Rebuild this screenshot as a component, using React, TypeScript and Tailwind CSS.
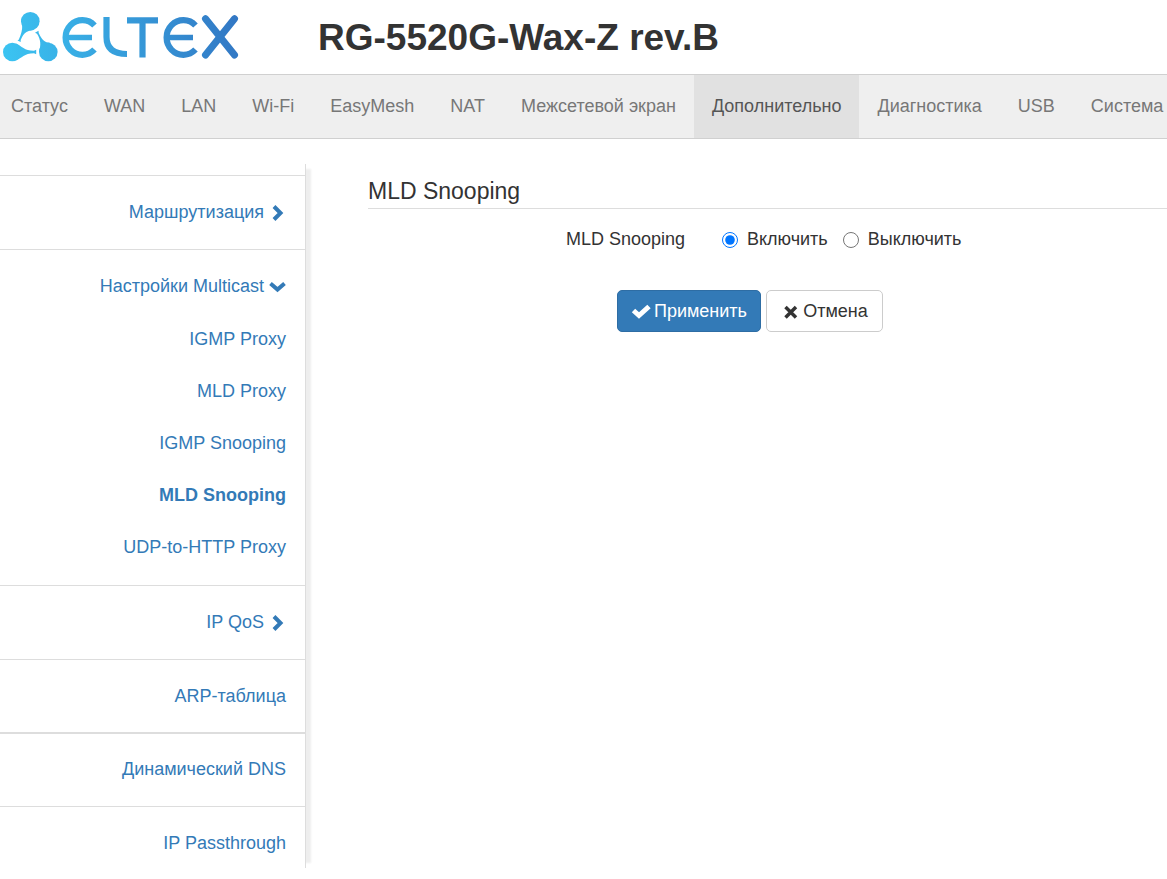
import { useState } from "react";

interface SubItem {
    label: string;
    active?: boolean;
}

interface MenuItem {
    label: string;
    arrow?: "right" | "down";
    children?: SubItem[];
}

const tabs = ["Статус", "WAN", "LAN", "Wi-Fi", "EasyMesh", "NAT", "Межсетевой экран", "Дополнительно", "Диагностика", "USB", "Система"];

const menu: MenuItem[] = [
    { label: "Маршрутизация", arrow: "right" },
    {
        label: "Настройки Multicast",
        arrow: "down",
        children: [
            { label: "IGMP Proxy" },
            { label: "MLD Proxy" },
            { label: "IGMP Snooping" },
            { label: "MLD Snooping", active: true },
            { label: "UDP-to-HTTP Proxy" },
        ],
    },
    { label: "IP QoS", arrow: "right" },
    { label: "ARP-таблица" },
    { label: "Динамический DNS" },
    { label: "IP Passthrough" },
];

const Logo = () => (
    <svg viewBox="0 0 240 64" className="h-16 w-60" role="img" aria-label="Eltex">
        <defs>
            <linearGradient id="eltex" gradientUnits="userSpaceOnUse" x1="3" y1="50" x2="238" y2="20">
                <stop offset="0" stopColor="#3bc4f2" />
                <stop offset="1" stopColor="#3277c4" />
            </linearGradient>
        </defs>
        <g fill="url(#eltex)">
            <circle cx="30.300" cy="21.200" r="9.300" />
            <path d="M21.200 19 Q23 27 21.500 32 Q20.500 36 18.700 39.700 L17.500 40.400 L20.700 42 L20.700 40 Q23 34 26.500 32 Q29 30.500 33 30 L30 21 Z" />
            <circle cx="12.300" cy="52" r="9.300" />
            <path d="M16 43.500 C22 46 24 50.800 34 50.800 L36.200 49.800 V54.200 L34 53.200 C24 53.200 22 58 16 60.500 L12 52 Z" />
            <circle cx="48.300" cy="52" r="9.300" />
            <path d="M39 52 C41 45 41 40 37 33.800 L35 32.800 L38.500 30.700 L38.700 33 C42 40 45 42.700 50 42.700 L48 52 Z" />
        </g>
        <g fill="none" stroke="url(#eltex)" strokeWidth="6.200">
            <path d="M94.500 25.500 A16.800 17.300 0 1 0 94.500 49.500" />
            <path d="M64 37.500 L92 37.499" strokeWidth="5.600" />
            <path d="M106.500 17 V37 Q106.500 54 127 54" />
            <path d="M127 20.300 L158 20.299 M142.500 20 L142.501 57.500" />
            <path d="M195.500 25.500 A16.800 17.300 0 1 0 195.500 49.500" />
            <path d="M165 37.500 L193 37.499" strokeWidth="5.600" />
            <path d="M205.500 18.700 L234.500 55 M234.500 18.700 L205.500 55" strokeWidth="7" strokeLinecap="round" />
        </g>
    </svg>
);

const Arrow = ({ direction }: { direction: "right" | "down" }) => (
    <svg viewBox="0 0 18 18" className="size-[18px] fill-none stroke-current stroke-[4]" aria-hidden="true">
        {direction === "right" ? <path d="M6 2.500 L12.500 9 L6 15.500" /> : <path d="M2.500 5.500 L9.500 11.500 L16.500 5.500" />}
    </svg>
);

const App = () => {
    const [enabled, setEnabled] = useState(true);

    return (
        <div className="min-h-screen overflow-hidden bg-white font-['Liberation_Sans',Arial,sans-serif] text-lg leading-[25px] text-[#333]">
            <header className="flex h-[74px] items-start">
                <Logo />
                <h1 className="ml-[78px] mt-4 whitespace-nowrap text-[37px] leading-[44px] font-bold">RG-5520G-Wax-Z rev.B</h1>
            </header>

            <nav className="flex border-y border-[#d0d0d0] bg-[#efefef]">
                {tabs.map((tab) => (
                    <a
                        key={tab}
                        href="#"
                        className={
                            tab === "Дополнительно"
                                ? "whitespace-nowrap bg-[#e1e1e1] px-[18px] py-[19px] text-[#555]"
                                : "whitespace-nowrap px-[18px] py-[19px] text-[#777] first:pl-[11px]"
                        }
                    >
                        {tab}
                    </a>
                ))}
            </nav>

            <div className="flex items-start pt-[25px]">
                <aside className="w-[306px] shrink-0 border-r border-[#ddd] pt-[11px] shadow-[10px_0_2px_-5px_#eee]">
                    <ul>
                        {menu.map((item) => (
                            <li
                                key={item.label}
                                className="border-t border-[#ddd] py-6 pr-[19px] text-right text-[#337ab7] nth-4:pb-[23px] nth-5:border-t-2 nth-5:pt-[23px] last:pb-3"
                            >
                                <a href="#" className="flex items-center justify-end gap-1">
                                    {item.label}
                                    {item.arrow && <Arrow direction={item.arrow} />}
                                </a>
                                {item.children && (
                                    <div className="mt-7 mb-px space-y-[27px]">
                                        {item.children.map((child) => (
                                            <a key={child.label} href="#" className={child.active ? "block font-bold" : "block"}>
                                                {child.label}
                                            </a>
                                        ))}
                                    </div>
                                )}
                            </li>
                        ))}
                    </ul>
                </aside>

                <main className="ml-[62px] flex-1 pt-[13px]">
                    <h2 className="border-b border-[#ddd] pb-[3px] text-[23px] leading-7">MLD Snooping</h2>
                    <form onSubmit={(e) => e.preventDefault()}>
                        <fieldset className="mt-[18px] flex items-center">
                            <legend className="float-left w-[317px] text-right">MLD Snooping</legend>
                            <label className="ml-[37px] flex items-center gap-[9px]">
                                <input type="radio" name="mld" className="size-4" checked={enabled} onChange={() => setEnabled(true)} />
                                Включить
                            </label>
                            <label className="ml-[15px] flex items-center gap-[9px]">
                                <input type="radio" name="mld" className="size-4" checked={!enabled} onChange={() => setEnabled(false)} />
                                Выключить
                            </label>
                        </fieldset>
                        <div className="mt-[38px] ml-[249px] flex gap-[5px]">
                            <button type="submit" className="flex h-[42px] w-36 items-center justify-center gap-[3px] rounded-[5px] border border-[#2e6da4] bg-[#337ab7] text-white">
                                <svg viewBox="0 0 20 18" className="h-[18px] w-5 fill-none stroke-current stroke-[5]" aria-hidden="true">
                                    <path d="M2.500 8.500 L8 13.500 L18 4.500" />
                                </svg>
                                Применить
                            </button>
                            <button type="button" className="flex h-[42px] w-[117px] items-center justify-center gap-1 rounded-[5px] border border-[#ccc] bg-white" onClick={() => setEnabled(true)}>
                                <svg viewBox="0 0 18 18" className="size-[18px] fill-none stroke-current stroke-[3.500]" aria-hidden="true">
                                    <path d="M4.500 5 L15 15.500 M15 5 L4.500 15.500" />
                                </svg>
                                Отмена
                            </button>
                        </div>
                    </form>
                </main>
            </div>
        </div>
    );
};

export default App;
